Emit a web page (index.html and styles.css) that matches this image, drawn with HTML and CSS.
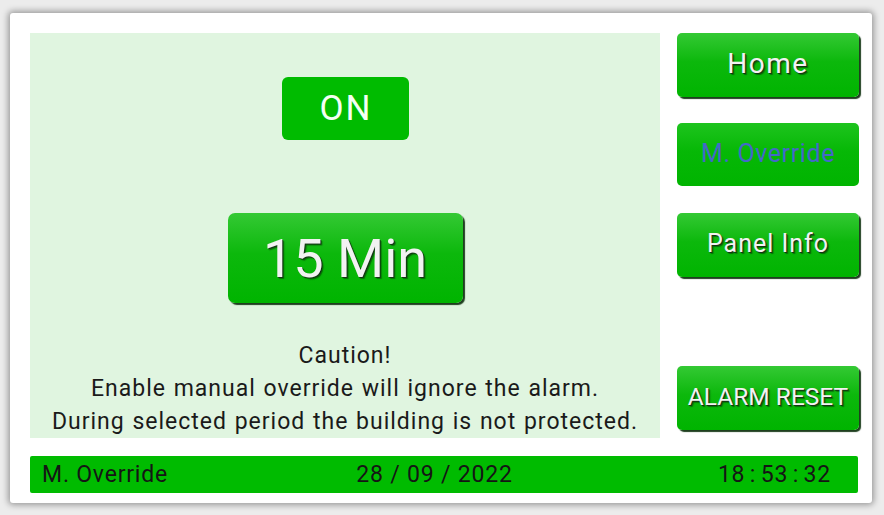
FILE: index.html
```html
<!DOCTYPE html>
<html>
<head>
<meta charset="utf-8">
<link rel="stylesheet" href="styles.css">
</head>
<body>
<div class="frame">
  <div class="main">
    <div class="panel">
      <div class="on">ON</div>
      <div class="btn timer">15 Min</div>
      <div class="caution">
        <div>Caution!</div>
        <div>Enable manual override will ignore the alarm.</div>
        <div>During selected period the building is not protected.</div>
      </div>
    </div>
    <div class="side">
      <div class="btn nav home">Home</div>
      <div class="btn nav flat active">M. Override</div>
      <div class="btn nav info">Panel Info</div>
      <div class="btn nav reset">ALARM RESET</div>
    </div>
  </div>
  <div class="status">
    <span class="s-left">M. Override</span>
    <span class="s-mid">28 / 09 / 2022</span>
    <span class="s-right">18 : 53 : 32</span>
  </div>
</div>
</body>
</html>
```
FILE: styles.css
```css
html, body {
  margin: 0;
  padding: 0;
}
body {
  width: 884px;
  height: 515px;
  background: #ececec;
  font-family: Roboto, "Liberation Sans", sans-serif;
  overflow: hidden;
}
.frame {
  margin: 13px 0 0 10px;
  width: 862px;
  height: 490px;
  box-sizing: border-box;
  padding: 20px 13px 0 20px;
  background: #fff;
  border-radius: 3px;
  box-shadow: 0 0 6px 2px rgba(0,0,0,0.35);
}
.main {
  display: flex;
  gap: 17px;
  height: 405px;
}
.panel {
  width: 630px;
  background: #e0f5e0;
  display: flex;
  flex-direction: column;
  align-items: center;
}
.on {
  margin-top: 44px;
  width: 127px;
  height: 63px;
  background: #00bb00;
  border-radius: 6px;
  color: #f4fff4;
  font-size: 35px;
  letter-spacing: 2px;
  text-indent: 2px;
  display: flex;
  align-items: center;
  justify-content: center;
}
.btn {
  background: linear-gradient(#34c934, #0cb80c 45%, #00b400);
  border-radius: 5px;
  display: flex;
  align-items: center;
  justify-content: center;
  color: #f2f2f2;
  text-shadow: 1px 1px 0 #153515, 2px 2px 1px rgba(0,40,0,0.5);
  box-shadow: 2px 2px 1px #1f3f1f;
}
.timer {
  margin-top: 73px;
  width: 235px;
  height: 90px;
  font-size: 54px;
  border-radius: 7px;
}
.caution {
  margin-top: 36px;
  text-align: center;
  font-size: 23px;
  letter-spacing: 1px;
  word-spacing: 1px;
  line-height: 33px;
  color: #1a1a1a;
}
.side {
  width: 182px;
  display: flex;
  flex-direction: column;
}
.nav {
  height: 64px;
  font-size: 25px;
  letter-spacing: 1px;
  padding-bottom: 3px;
  box-sizing: border-box;
}
.home {
  font-size: 28px;
  letter-spacing: 1.5px;
}
.flat {
  margin-top: 26px;
  box-shadow: none;
  text-shadow: none;
  color: #4468c8;
  background: linear-gradient(#1ec41e, #06b806 45%, #00b400);
  height: 63px;
  letter-spacing: 0.6px;
}
.info {
  margin-top: 27px;
}
.reset {
  margin-top: 89px;
  font-size: 24.5px;
  letter-spacing: 0;
}
.status {
  margin-top: 18px;
  width: 828px;
  height: 37px;
  background: #00bb00;
  border-radius: 2px;
  display: grid;
  grid-template-columns: 1fr auto 1fr;
  align-items: center;
  font-size: 23px;
  letter-spacing: 0.8px;
  color: #151515;
  padding: 0 27px 0 12px;
  box-sizing: border-box;
}
.s-mid {
  padding-right: 4px;
}
.s-right {
  justify-self: end;
  word-spacing: -2px;
}
```
